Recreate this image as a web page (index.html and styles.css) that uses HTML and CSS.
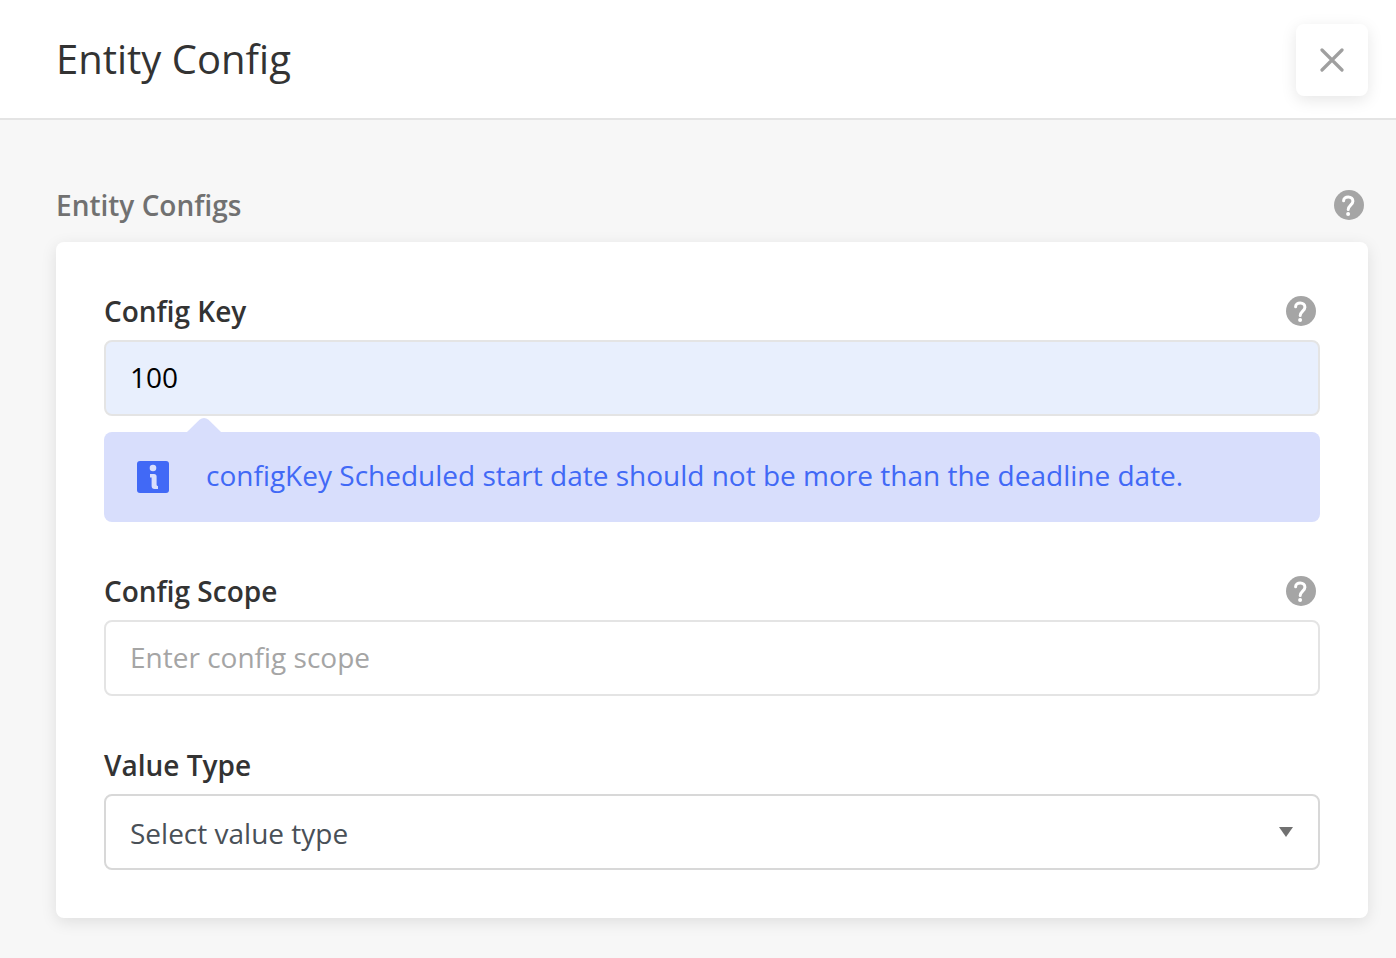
FILE: index.html
```
<!DOCTYPE html>
<html lang="en">
<head>
  <meta charset="UTF-8">
  <meta name="viewport" content="width=device-width, initial-scale=1">
  <title>Entity Config</title>
  <link rel="stylesheet" href="styles.css">
</head>
<body>
  <!-- shared help icon -->
  <svg class="sprite" aria-hidden="true">
    <symbol id="icon-help" viewBox="0 0 30 30">
      <circle cx="15" cy="15" r="15" fill="#a5a5a5"/>
      <path d="M9.6 10.8C9.6 8.5 11.7 7 14.3 7C17 7 18.9 8.7 18.9 11.2C18.9 14.7 14.2 15.6 14.2 19.6" fill="none" stroke="#fff" stroke-width="3" stroke-linecap="round" stroke-linejoin="round"/>
      <circle cx="14.1" cy="24" r="2" fill="#fff"/>
    </symbol>
  </svg>

  <header class="header">
    <h1>Entity Config</h1>
    <button type="button" class="close-btn" aria-label="Close">
      <svg width="24" height="24" viewBox="0 0 24 24">
        <path d="M2 2L22 22M22 2L2 22" fill="none" stroke="#9f9f9f" stroke-width="3.2" stroke-linecap="round"/>
      </svg>
    </button>
  </header>

  <main class="content">
    <div class="row section-row">
      <h2>Entity Configs</h2>
      <button type="button" class="help-btn" aria-label="About entity configs"><svg width="30" height="30"><use href="#icon-help"/></svg></button>
    </div>

    <form class="card">
      <div class="field">
        <div class="row">
          <label for="configKey">Config Key</label>
          <button type="button" class="help-btn" aria-label="About config key"><svg width="30" height="30"><use href="#icon-help"/></svg></button>
        </div>
        <input type="text" id="configKey" class="control filled" value="100" aria-describedby="configKeyInfo">
        <div class="message" id="configKeyInfo">
          <svg class="message-arrow" width="34" height="14" viewBox="0 0 34 14">
            <path d="M0 14L12.5 1.8Q17 -1.6 21.5 1.8L34 14Z" fill="#d8defc"/>
          </svg>
          <svg class="message-icon" width="32" height="32" viewBox="0 0 32 32">
            <rect width="32" height="32" rx="3" fill="#4169f6"/>
            <circle cx="16" cy="7" r="3.3" fill="#d8defc"/>
            <path d="M13 13H17Q19.6 13 19.6 15.6V23.4Q19.6 25 21 25V28H17.6Q14.6 28 14.6 25V16.4H13Z" fill="#d8defc"/>
          </svg>
          <span>configKey Scheduled start date should not be more than the deadline date.</span>
        </div>
      </div>

      <div class="field">
        <div class="row">
          <label for="configScope">Config Scope</label>
          <button type="button" class="help-btn" aria-label="About config scope"><svg width="30" height="30"><use href="#icon-help"/></svg></button>
        </div>
        <input type="text" id="configScope" class="control" placeholder="Enter config scope">
      </div>

      <div class="field">
        <div class="row">
          <label for="valueType">Value Type</label>
        </div>
        <div class="select-wrap">
          <select id="valueType" class="control">
            <option>Select value type</option>
          </select>
          <svg class="caret" width="14" height="10" viewBox="0 0 14 10">
            <path d="M0 0H14L7 10Z" fill="#717171"/>
          </svg>
        </div>
      </div>
    </form>
  </main>
</body>
</html>
```
FILE: styles.css
```
* {
  box-sizing: border-box;
}

body {
  margin: 0;
  font-family: 'Open Sans', sans-serif;
  font-size: 28px;
  line-height: 38px;
  color: #333;
  background: #f7f7f7;
}

h1, h2 {
  margin: 0;
}

button, input, select {
  font: inherit;
}

.sprite {
  display: none;
}

.header {
  display: flex;
  align-items: center;
  justify-content: space-between;
  padding: 24px 28px 22px 56px;
  background: #fff;
  border-bottom: 2px solid #e4e4e4;
}

h1 {
  padding-bottom: 2px;
  font-size: 40px;
  line-height: 56px;
  font-weight: 400;
}

.close-btn {
  display: flex;
  align-items: center;
  justify-content: center;
  width: 72px;
  height: 72px;
  padding: 0;
  border: none;
  border-radius: 8px;
  background: #fff;
  box-shadow: 0 4px 16px rgba(0, 0, 0, 0.1);
  cursor: pointer;
}

.content {
  padding: 64px 28px 40px 56px;
}

/* label on the left, help on the right */
.row {
  display: flex;
  align-items: flex-start;
  justify-content: space-between;
  padding: 2px 4px 10px 0;
}

.section-row {
  padding-bottom: 18px;
}

h2 {
  font-size: 28px;
  font-weight: 600;
  color: #717171;
}

label {
  font-weight: 600;
}

.help-btn {
  display: flex;
  padding: 4px 0;
  border: none;
  background: none;
  cursor: pointer;
}

.card {
  display: flex;
  flex-direction: column;
  gap: 48px;
  padding: 48px;
  background: #fff;
  border-radius: 8px;
  box-shadow: 0 4px 16px rgba(0, 0, 0, 0.1);
}

.control {
  display: block;
  width: 100%;
  height: 76px;
  padding: 0 24px 2px;
  border: 2px solid #e4e4e4;
  border-radius: 8px;
  background: #fff;
  color: #000;
}

.control::placeholder {
  color: #a5a5a5;
  opacity: 1;
}

.control.filled {
  background: #e8effd;
}

.message {
  position: relative;
  display: flex;
  align-items: flex-start;
  gap: 37px;
  margin-top: 16px;
  padding: 24px 33px 28px;
  border-radius: 8px;
  background: #d8defc;
  color: #4169f6;
}

.message-arrow {
  position: absolute;
  top: -14px;
  left: 83px;
}

.message-icon {
  flex: none;
  margin-top: 5px;
}

.select-wrap {
  position: relative;
}

select.control {
  appearance: none;
  padding: 2px 24px 0;
  border-color: #d8d8d8;
  color: #495057;
}

.caret {
  position: absolute;
  top: 33px;
  right: 27px;
  pointer-events: none;
}
```
